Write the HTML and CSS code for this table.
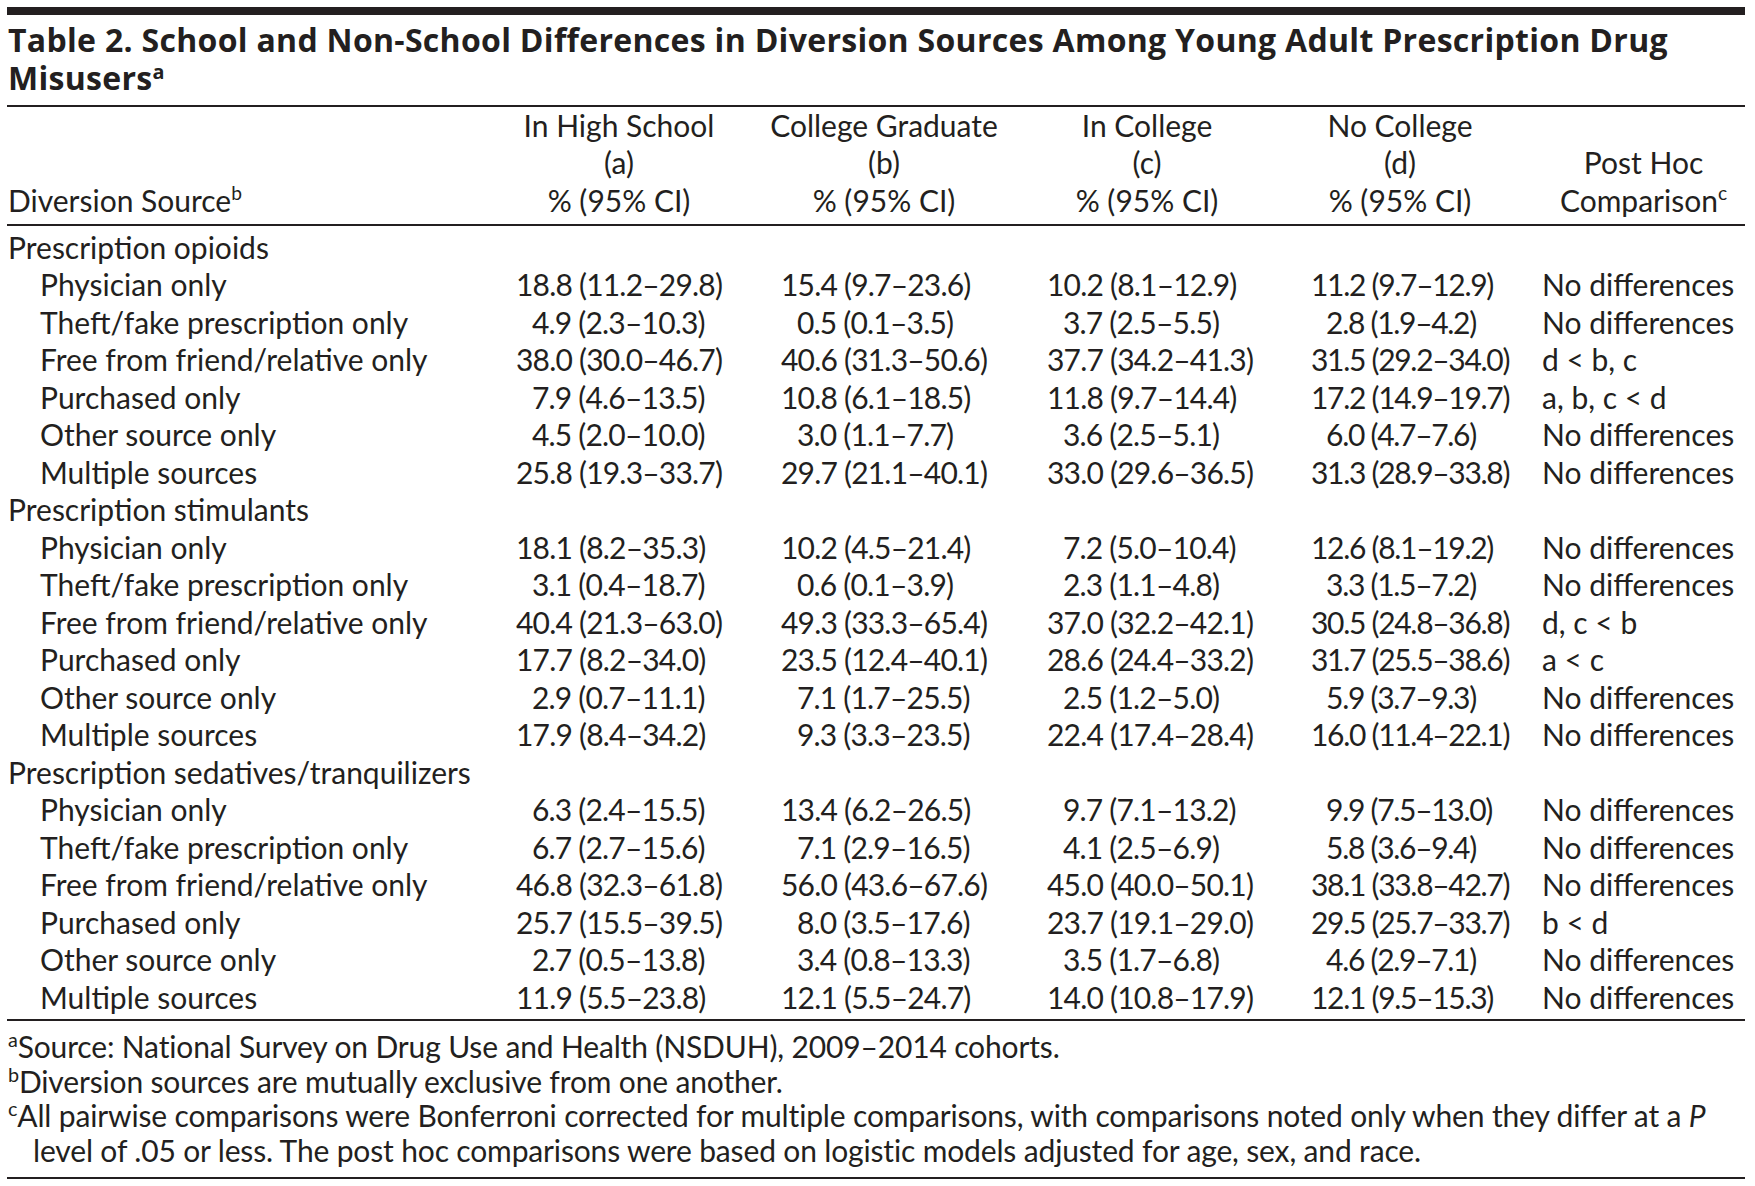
FILE: index.html
```html
<!DOCTYPE html>
<html lang="en">
<head>
<meta charset="utf-8">
<title>Table 2</title>
<link rel="stylesheet" href="styles.css">
</head>
<body>
<div class="page">
  <div class="topbar"></div>
  <h1 class="title">Table 2. School and Non-School Differences in Diversion Sources Among Young Adult Prescription Drug Misusers<sup>a</sup></h1>
  <table class="tbl">
    <colgroup>
      <col class="c-src"><col class="c-a"><col class="c-b"><col class="c-c"><col class="c-d"><col class="c-ph">
    </colgroup>
    <thead>
      <tr>
        <th class="h-src">Diversion Source<sup>b</sup></th>
        <th>In High School<br>(a)<br>% (95% CI)</th>
        <th>College Graduate<br>(b)<br>% (95% CI)</th>
        <th>In College<br>(c)<br>% (95% CI)</th>
        <th>No College<br>(d)<br>% (95% CI)</th>
        <th>Post Hoc<br>Comparison<sup>c</sup></th>
      </tr>
    </thead>
    <tbody>
      <tr class="grp"><td colspan="6">Prescription opioids</td></tr>
      <tr><td class="sub">Physician only</td><td>18.8 (11.2–29.8)</td><td>15.4 (9.7–23.6)</td><td>10.2 (8.1–12.9)</td><td>11.2 (9.7–12.9)</td><td>No differences</td></tr>
      <tr><td class="sub">Theft/fake prescription only</td><td class="s">4.9 (2.3–10.3)</td><td class="s">0.5 (0.1–3.5)</td><td class="s">3.7 (2.5–5.5)</td><td class="s">2.8 (1.9–4.2)</td><td>No differences</td></tr>
      <tr><td class="sub">Free from friend/relative only</td><td>38.0 (30.0–46.7)</td><td>40.6 (31.3–50.6)</td><td>37.7 (34.2–41.3)</td><td>31.5 (29.2–34.0)</td><td>d &lt; b, c</td></tr>
      <tr><td class="sub">Purchased only</td><td class="s">7.9 (4.6–13.5)</td><td>10.8 (6.1–18.5)</td><td>11.8 (9.7–14.4)</td><td>17.2 (14.9–19.7)</td><td>a, b, c &lt; d</td></tr>
      <tr><td class="sub">Other source only</td><td class="s">4.5 (2.0–10.0)</td><td class="s">3.0 (1.1–7.7)</td><td class="s">3.6 (2.5–5.1)</td><td class="s">6.0 (4.7–7.6)</td><td>No differences</td></tr>
      <tr><td class="sub">Multiple sources</td><td>25.8 (19.3–33.7)</td><td>29.7 (21.1–40.1)</td><td>33.0 (29.6–36.5)</td><td>31.3 (28.9–33.8)</td><td>No differences</td></tr>
      <tr class="grp"><td colspan="6">Prescription stimulants</td></tr>
      <tr><td class="sub">Physician only</td><td>18.1 (8.2–35.3)</td><td>10.2 (4.5–21.4)</td><td class="s">7.2 (5.0–10.4)</td><td>12.6 (8.1–19.2)</td><td>No differences</td></tr>
      <tr><td class="sub">Theft/fake prescription only</td><td class="s">3.1 (0.4–18.7)</td><td class="s">0.6 (0.1–3.9)</td><td class="s">2.3 (1.1–4.8)</td><td class="s">3.3 (1.5–7.2)</td><td>No differences</td></tr>
      <tr><td class="sub">Free from friend/relative only</td><td>40.4 (21.3–63.0)</td><td>49.3 (33.3–65.4)</td><td>37.0 (32.2–42.1)</td><td>30.5 (24.8–36.8)</td><td>d, c &lt; b</td></tr>
      <tr><td class="sub">Purchased only</td><td>17.7 (8.2–34.0)</td><td>23.5 (12.4–40.1)</td><td>28.6 (24.4–33.2)</td><td>31.7 (25.5–38.6)</td><td>a &lt; c</td></tr>
      <tr><td class="sub">Other source only</td><td class="s">2.9 (0.7–11.1)</td><td class="s">7.1 (1.7–25.5)</td><td class="s">2.5 (1.2–5.0)</td><td class="s">5.9 (3.7–9.3)</td><td>No differences</td></tr>
      <tr><td class="sub">Multiple sources</td><td>17.9 (8.4–34.2)</td><td class="s">9.3 (3.3–23.5)</td><td>22.4 (17.4–28.4)</td><td>16.0 (11.4–22.1)</td><td>No differences</td></tr>
      <tr class="grp"><td colspan="6">Prescription sedatives/tranquilizers</td></tr>
      <tr><td class="sub">Physician only</td><td class="s">6.3 (2.4–15.5)</td><td>13.4 (6.2–26.5)</td><td class="s">9.7 (7.1–13.2)</td><td class="s">9.9 (7.5–13.0)</td><td>No differences</td></tr>
      <tr><td class="sub">Theft/fake prescription only</td><td class="s">6.7 (2.7–15.6)</td><td class="s">7.1 (2.9–16.5)</td><td class="s">4.1 (2.5–6.9)</td><td class="s">5.8 (3.6–9.4)</td><td>No differences</td></tr>
      <tr><td class="sub">Free from friend/relative only</td><td>46.8 (32.3–61.8)</td><td>56.0 (43.6–67.6)</td><td>45.0 (40.0–50.1)</td><td>38.1 (33.8–42.7)</td><td>No differences</td></tr>
      <tr><td class="sub">Purchased only</td><td>25.7 (15.5–39.5)</td><td class="s">8.0 (3.5–17.6)</td><td>23.7 (19.1–29.0)</td><td>29.5 (25.7–33.7)</td><td>b &lt; d</td></tr>
      <tr><td class="sub">Other source only</td><td class="s">2.7 (0.5–13.8)</td><td class="s">3.4 (0.8–13.3)</td><td class="s">3.5 (1.7–6.8)</td><td class="s">4.6 (2.9–7.1)</td><td>No differences</td></tr>
      <tr class="last"><td class="sub">Multiple sources</td><td>11.9 (5.5–23.8)</td><td>12.1 (5.5–24.7)</td><td>14.0 (10.8–17.9)</td><td>12.1 (9.5–15.3)</td><td>No differences</td></tr>
    </tbody>
  </table>
  <div class="notes">
    <p class="note"><sup>a</sup>Source: National Survey on Drug Use and Health (NSDUH), 2009–2014 cohorts.</p>
    <p class="note"><sup>b</sup>Diversion sources are mutually exclusive from one another.</p>
    <p class="note"><sup>c</sup>All pairwise comparisons were Bonferroni corrected for multiple comparisons, with comparisons noted only when they differ at a <i>P</i> level of .05 or less. The post hoc comparisons were based on logistic models adjusted for age, sex, and race.</p>
  </div>
</div>
</body>
</html>
```
FILE: styles.css
```css
html, body {
  margin: 0;
  padding: 0;
  background: #ffffff;
}

body {
  font-family: "Lato", "Open Sans", "Liberation Sans", sans-serif;
  color: #231f20;
}

.page {
  width: 1738px;
  padding: 7px 10px 0 7px;
}

.topbar {
  height: 8px;
  background: #231f20;
}

.title {
  margin: 5.6px 0 8.4px 1px;
  font-family: "Open Sans", "Lato", "Liberation Sans", sans-serif;
  font-size: 32px;
  line-height: 38px;
  font-weight: 700;
  letter-spacing: 0.3px;
}

.title sup {
  font-size: 0.62em;
  font-weight: 700;
  vertical-align: 0.55em;
  line-height: 0;
}

.tbl {
  width: 1738px;
  table-layout: fixed;
  border-collapse: separate;
  border-spacing: 0;
  font-size: 30px;
}

.c-src { width: 499px; }
.c-a { width: 226px; }
.c-b { width: 304px; }
.c-c { width: 222px; }
.c-d { width: 284px; }
.c-ph { width: 203px; }

.tbl th {
  font-weight: 400;
  line-height: 37.5px;
  text-align: center;
  vertical-align: bottom;
  padding: 0 0 4.5px 0;
  border-top: 2px solid #231f20;
  border-bottom: 2px solid #231f20;
  white-space: nowrap;
}

.tbl th.h-src {
  text-align: left;
  padding-left: 1px;
}

.tbl sup {
  font-size: 0.64em;
  vertical-align: 0.6em;
  line-height: 0;
}

.tbl td {
  line-height: 37.5px;
  padding: 0;
  white-space: nowrap;
  text-align: left;
}

.tbl tr.grp td { padding-left: 1px; }
.tbl td.sub { padding-left: 33px; }

.tbl td:nth-child(2),
.tbl td:nth-child(3),
.tbl td:nth-child(4) {
  letter-spacing: -0.8px;
}

.tbl td:nth-child(5) {
  letter-spacing: -1.3px;
}

.tbl td:nth-child(2) { padding-left: 10px; }
.tbl td:nth-child(3) { padding-left: 49px; }
.tbl td:nth-child(4) { padding-left: 11px; }
.tbl td:nth-child(5) { padding-left: 53px; }
.tbl td:nth-child(6) { padding-left: 0; }

.tbl td.s:nth-child(2) { padding-left: calc(10px + 1ch - 1.5px); }
.tbl td.s:nth-child(3) { padding-left: calc(49px + 1ch - 1.5px); }
.tbl td.s:nth-child(4) { padding-left: calc(11px + 1ch - 1.5px); }
.tbl td.s:nth-child(5) { padding-left: calc(53px + 1ch - 2.3px); }

.tbl tbody tr:first-child td { padding-top: 2.6px; }
.tbl tbody tr.last td {
  padding-bottom: 3px;
  border-bottom: 2px solid #231f20;
}

.notes {
  padding: 8px 0 9px 0;
  border-bottom: 2px solid #231f20;
}

.note {
  margin: 0;
  font-size: 30px;
  line-height: 34.7px;
  padding-left: 26px;
  text-indent: -25px;
  letter-spacing: -0.15px;
}

.note sup {
  font-size: 0.66em;
  vertical-align: 0.55em;
  line-height: 0;
}
```
